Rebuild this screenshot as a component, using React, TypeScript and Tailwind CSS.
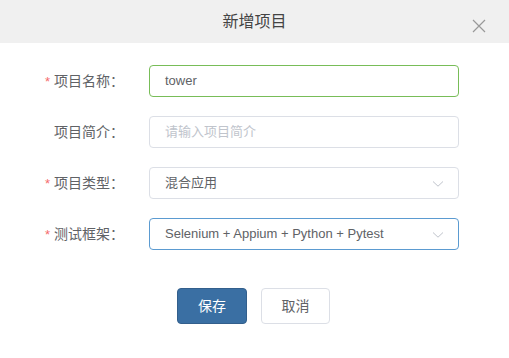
import React from "react";

const font = { fontFamily: '"Liberation Sans", Arial, "Noto Sans CJK SC", sans-serif' };

function Chevron() {
  return (
    <svg width="12" height="8" viewBox="0 0 12 8" fill="none" className="absolute right-[14px] top-[12px]">
      <path d="M1 1.5 L6 6.2 L11 1.5" stroke="#c0c4cc" strokeWidth="1" />
    </svg>
  );
}

function Label({ text, required }: { text: string; required?: boolean }) {
  return (
    <div className="w-[149px] h-[32px] shrink-0 pr-[25px] flex items-center justify-end text-[14px] text-[#606266] leading-none">
      {required && <span className="text-[#f56c6c] text-[13px] mr-[4px]">*</span>}
      <span>{text}</span>
    </div>
  );
}

export default function App() {
  return (
    <div className="w-[509px] h-[358px] bg-white flex flex-col" style={font}>
      <div className="h-[43px] bg-[#f0f0f0] relative flex items-center justify-center shrink-0">
        <span className="text-[16px] text-[#444444]">新增项目</span>
        <svg width="14" height="14" viewBox="0 0 14 14" className="absolute left-[472px] top-[19px]">
          <path d="M1 1 L13 13 M13 1 L1 13" stroke="#999999" strokeWidth="1.2" />
        </svg>
      </div>
      <div className="flex flex-col gap-[19px] pt-[22px]">
        <div className="flex items-center h-[32px]">
          <Label text="项目名称：" required />
          <div className="w-[310px] h-[32px] rounded-[4px] border border-[#78bd58] flex items-center pl-[15px] text-[13px] text-[#606266]">
            tower
          </div>
        </div>
        <div className="flex items-center h-[32px]">
          <Label text="项目简介：" />
          <div className="w-[310px] h-[32px] rounded-[4px] border border-[#dcdfe6] flex items-center pl-[15px] text-[13px] text-[#c0c4cc]">
            请输入项目简介
          </div>
        </div>
        <div className="flex items-center h-[32px]">
          <Label text="项目类型：" required />
          <div className="relative w-[310px] h-[32px] rounded-[4px] border border-[#dcdfe6] flex items-center pl-[15px] text-[13px] text-[#606266]">
            混合应用
            <Chevron />
          </div>
        </div>
        <div className="flex items-center h-[32px]">
          <Label text="测试框架：" required />
          <div className="relative w-[310px] h-[32px] rounded-[4px] border border-[#5b9bd1] flex items-center pl-[15px] text-[13px] text-[#606266]">
            Selenium + Appium + Python + Pytest
            <Chevron />
          </div>
        </div>
      </div>
      <div className="flex pl-[177px] gap-[14px] mt-[38px]">
        <button className="w-[70px] h-[36px] rounded-[4px] bg-[#3a6fa3] border border-[#335f8c] text-white text-[14px]">
          保存
        </button>
        <button className="w-[69px] h-[36px] rounded-[4px] bg-white border border-[#dcdfe6] text-[#606266] text-[14px]">
          取消
        </button>
      </div>
    </div>
  );
}
